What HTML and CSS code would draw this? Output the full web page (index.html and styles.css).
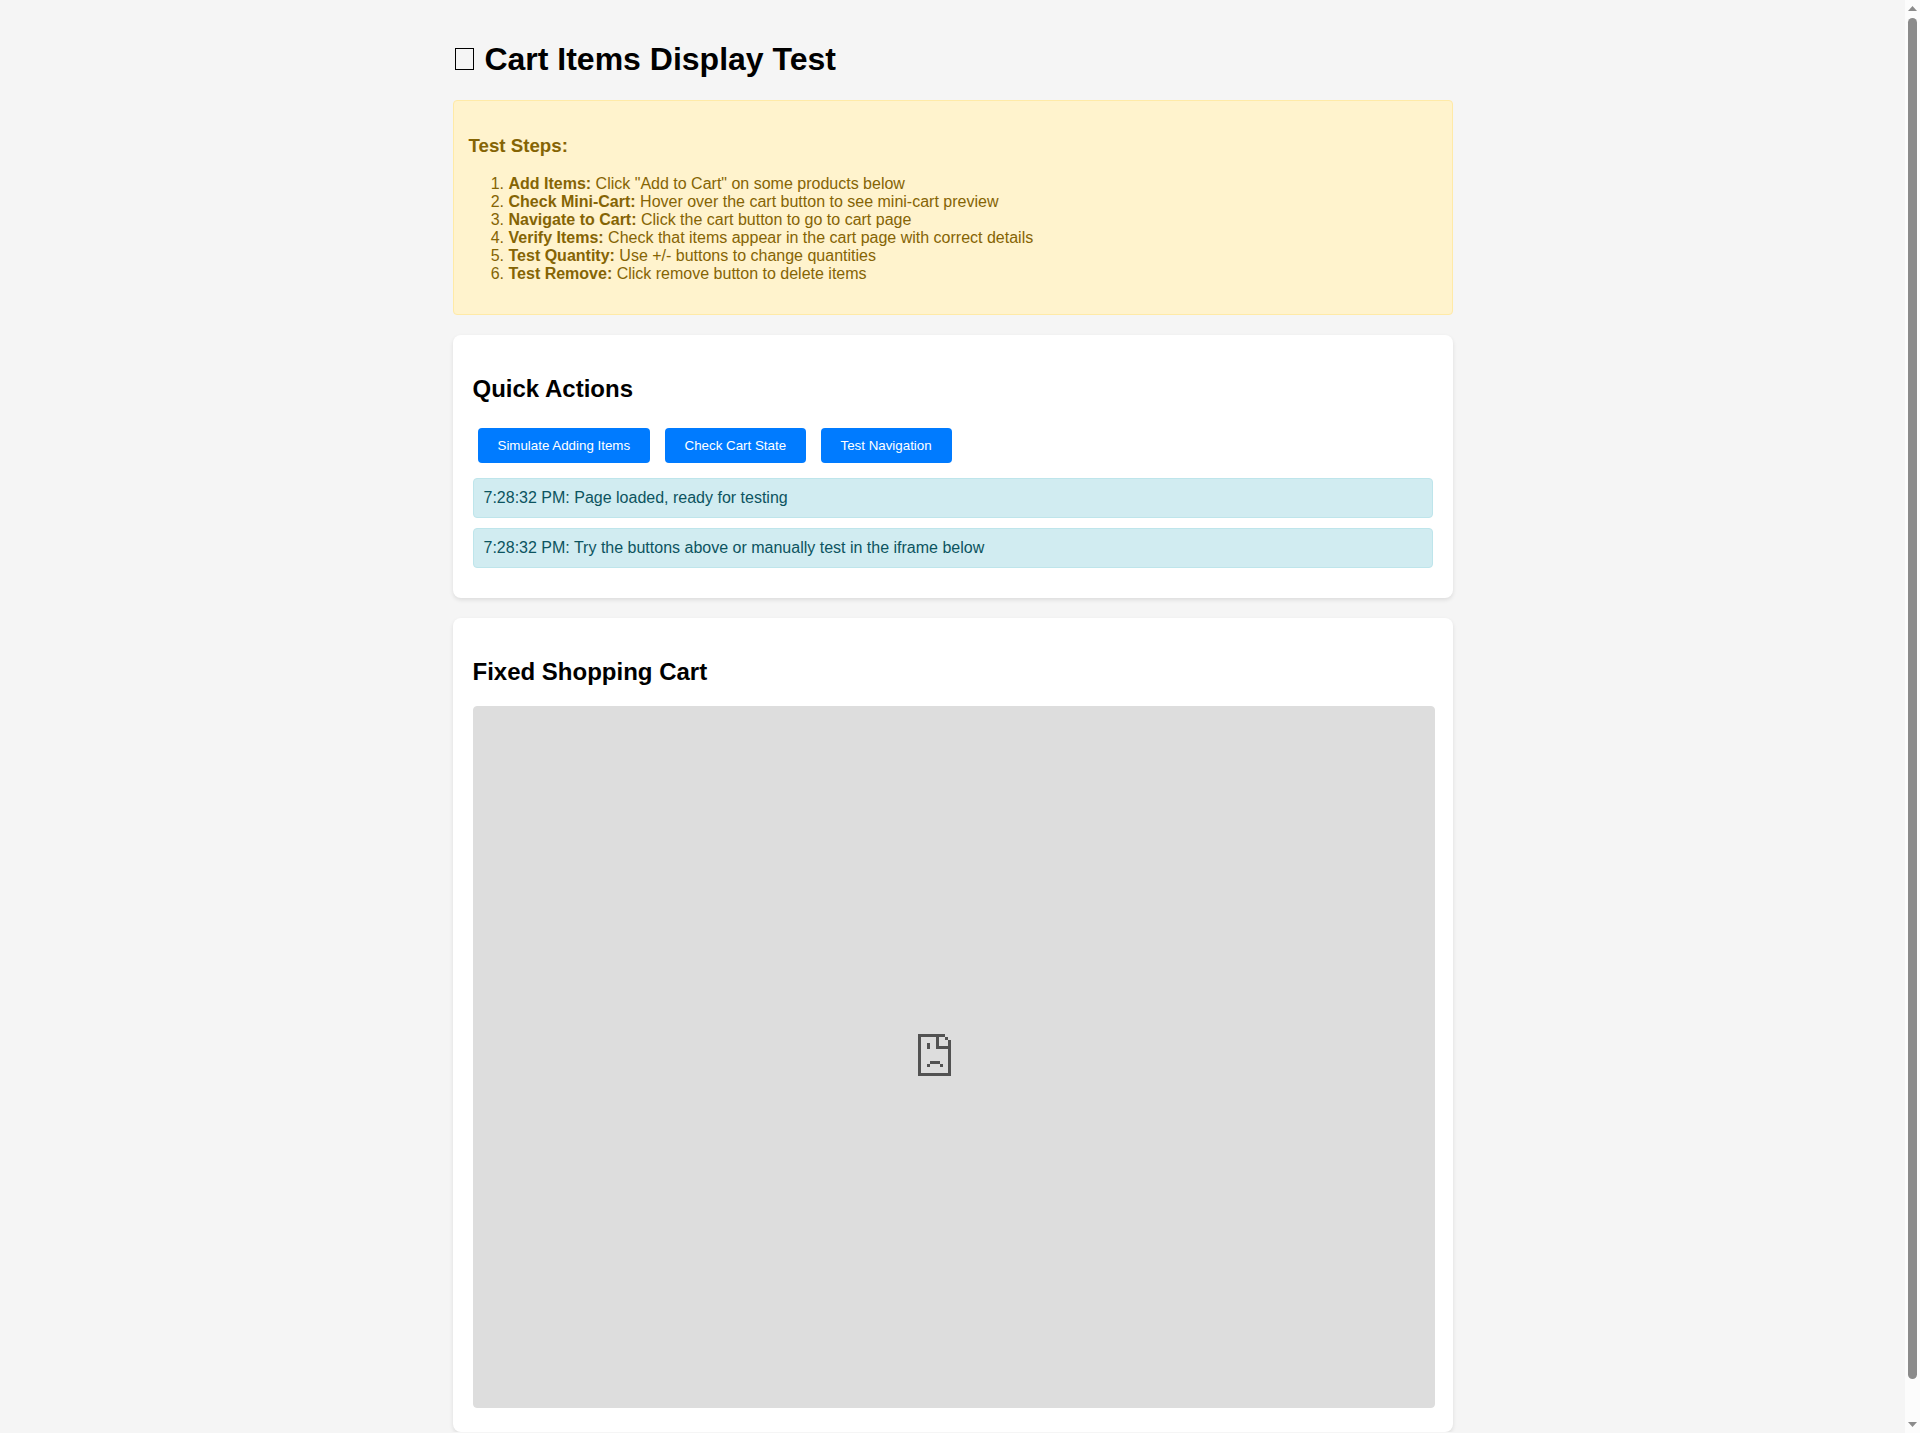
FILE: index.html
```html
<!DOCTYPE html>
<html lang="en">
<head>
<meta charset="utf-8">
<title>Cart Items Display Test</title>
<link rel="stylesheet" href="styles.css">
</head>
<body>
<main class="page">
  <h1><span class="glyph-box" aria-hidden="true"></span> Cart Items Display Test</h1>

  <section class="instructions">
    <h3>Test Steps:</h3>
    <ol>
      <li><strong>Add Items:</strong> Click "Add to Cart" on some products below</li>
      <li><strong>Check Mini-Cart:</strong> Hover over the cart button to see mini-cart preview</li>
      <li><strong>Navigate to Cart:</strong> Click the cart button to go to cart page</li>
      <li><strong>Verify Items:</strong> Check that items appear in the cart page with correct details</li>
      <li><strong>Test Quantity:</strong> Use +/- buttons to change quantities</li>
      <li><strong>Test Remove:</strong> Click remove button to delete items</li>
    </ol>
  </section>

  <section class="card">
    <h2>Quick Actions</h2>
    <div class="actions">
      <button type="button" class="button">Simulate Adding Items</button>
      <button type="button" class="button">Check Cart State</button>
      <button type="button" class="button">Test Navigation</button>
    </div>
    <div class="log">
      <div class="status">7:28:32 PM: Page loaded, ready for testing</div>
      <div class="status">7:28:32 PM: Try the buttons above or manually test in the iframe below</div>
    </div>
  </section>

  <section class="card">
    <h2>Fixed Shopping Cart</h2>
    <div class="frame">
      <svg class="sad-page" viewBox="0 0 33 42" width="33" height="42" shape-rendering="crispEdges" role="img" aria-label="Page failed to load">
        <path fill="#525252" d="M0 0H27V3H21V12H30V6H33V42H0ZM3 3V39H30V15H18V3ZM27 3H30V6H27ZM9 9H12V15H9ZM12 27H22V30H12ZM9 30H12V33H9ZM22 30H25V33H22Z" fill-rule="evenodd"/>
      </svg>
    </div>
  </section>
</main>

<div class="scrollbar" aria-hidden="true">
  <span class="arrow arrow-up"></span>
  <span class="thumb"></span>
  <span class="arrow arrow-down"></span>
</div>
</body>
</html>
```
FILE: styles.css
```css
body {
  margin: 0;
  padding-right: 15px;
  background: #f5f5f5;
  font-family: "Liberation Sans", Arial, sans-serif;
}

.page {
  max-width: 1000px;
  margin: 0 auto;
  padding-top: 20px;
  display: flow-root;
}

.glyph-box {
  display: inline-block;
  box-sizing: border-box;
  width: 19px;
  height: 22px;
  margin: 0 2px;
  border: 1px solid #000;
}

.instructions {
  margin-bottom: 20px;
  padding: 15px;
  border: 1px solid #ffeaa7;
  border-radius: 4px;
  background: #fff3cd;
  color: #856404;
}

.card {
  margin: 20px 0;
  padding: 20px;
  border-radius: 8px;
  background: #fff;
  box-shadow: 0 2px 4px rgba(0, 0, 0, 0.1);
}

.card:last-child {
  margin-bottom: 0;
  padding-bottom: 24px;
}

.button {
  margin: 5px;
  padding: 10px 20px;
  border: 0;
  border-radius: 4px;
  background: #007bff;
  color: #fff;
  font-family: inherit;
  cursor: pointer;
}

.log {
  display: flow-root;
}

.status {
  margin: 10px 0;
  padding: 10px;
  border: 1px solid #bee5eb;
  border-radius: 4px;
  background: #d1ecf1;
  color: #0c5460;
}

.frame {
  display: flex;
  align-items: center;
  justify-content: center;
  box-sizing: border-box;
  width: calc(100% + 2px);
  height: 702px;
  padding: 0 38px 4px 0;
  border: 1px solid #ddd;
  border-radius: 4px;
  background: #ddd;
}

.scrollbar {
  position: fixed;
  inset: 0 0 0 auto;
  box-sizing: border-box;
  width: 15px;
  padding: 6px 3px;
  display: flex;
  flex-direction: column;
  background: #fcfcfc;
}

.arrow {
  height: 5px;
  background: #8b8b8b;
}

.arrow-up {
  margin-bottom: 7px;
  clip-path: polygon(50% 0, 100% 100%, 0 100%);
}

.arrow-down {
  margin-top: 43px;
  clip-path: polygon(0 0, 100% 0, 50% 100%);
}

.thumb {
  flex: 1;
  border-radius: 5px;
  background: #8b8b8b;
}
```
